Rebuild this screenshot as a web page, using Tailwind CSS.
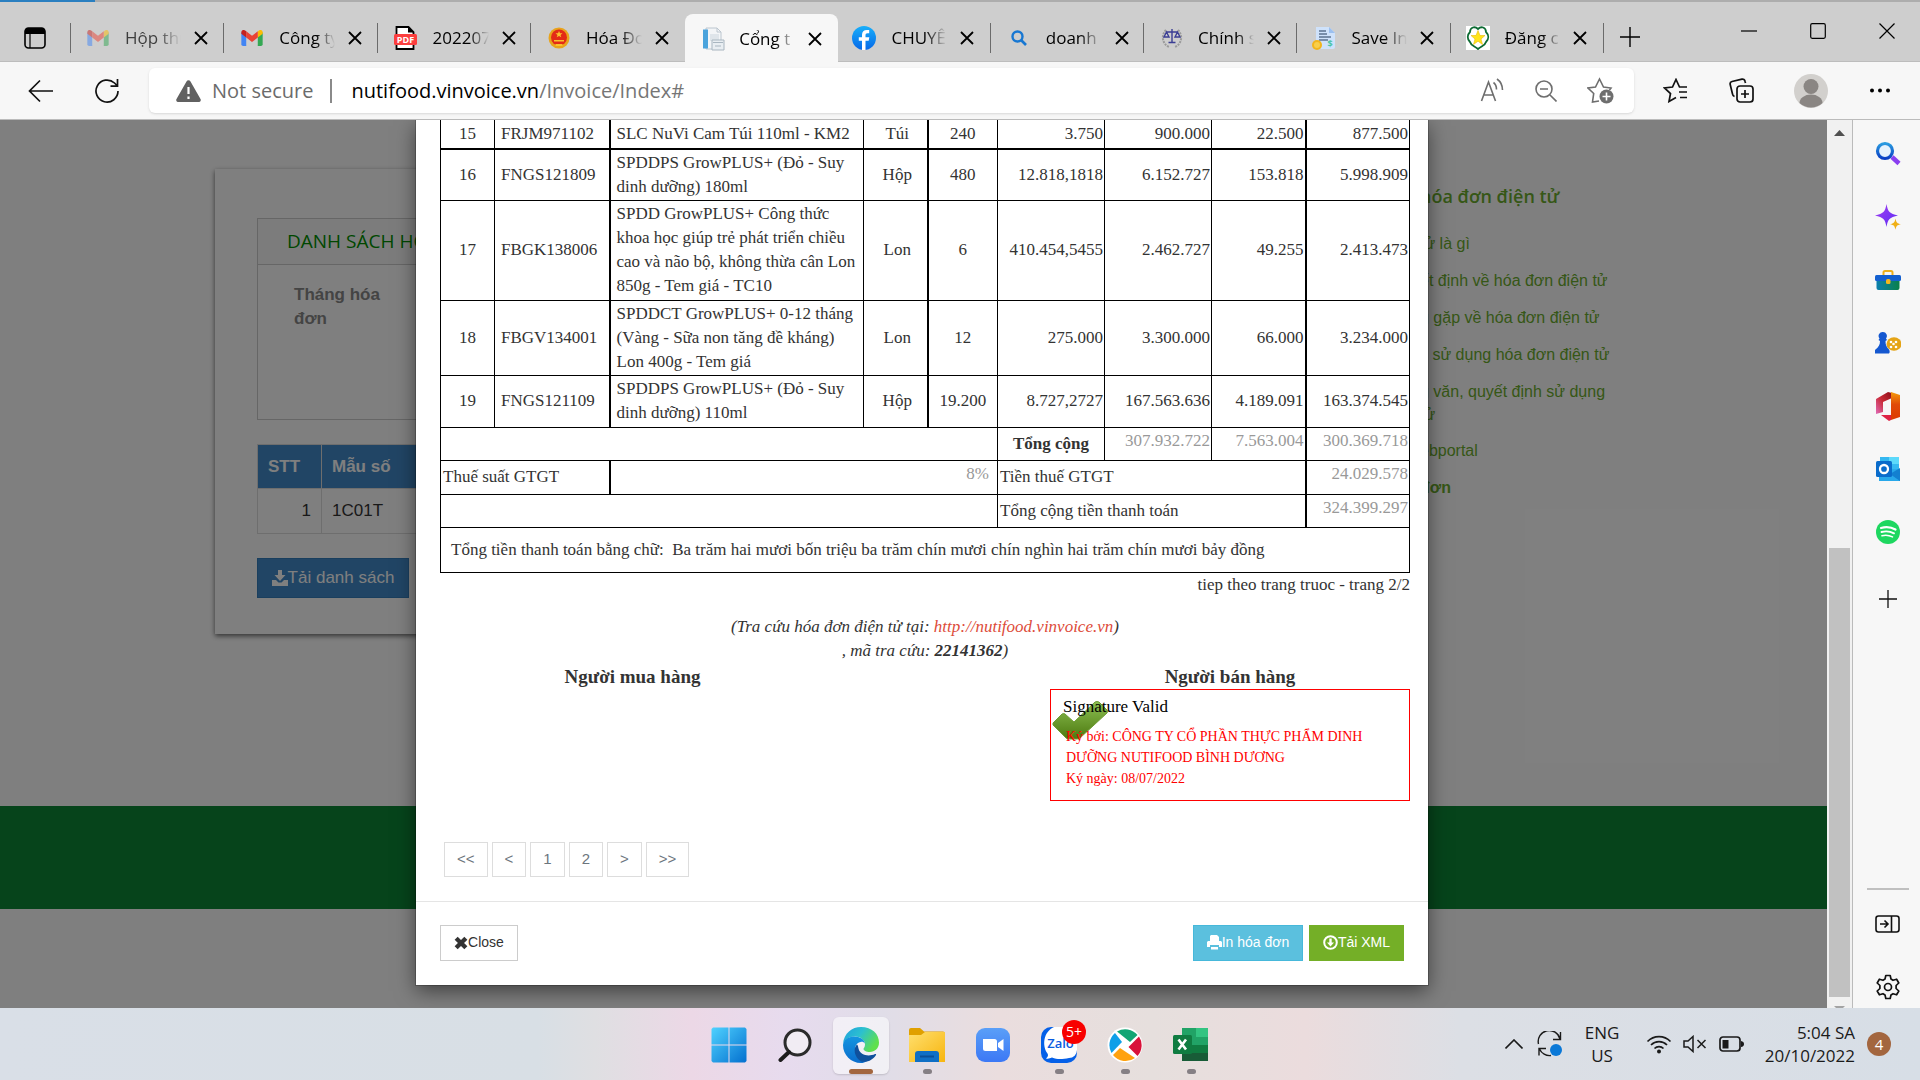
<!DOCTYPE html>
<html lang="vi">
<head>
    <meta charset="UTF-8">
    <meta name="viewport" content="width=device-width, initial-scale=1.0">
    <title>Cổng thông tin hóa đơn điện tử</title>
    <script src="https://cdn.jsdelivr.net/npm/@tailwindcss/browser@4"></script>
</head>
<body class="h-screen flex flex-col overflow-hidden bg-[#f7f7f7] text-black font-['Open_Sans','Noto_Sans',sans-serif]">

    <!-- shared symbols and gradients -->
    <svg class="absolute w-0 h-0">
        <symbol id="x" viewBox="0 0 16 16"><path d="M2 2l12 12M14 2L2 14" stroke="currentColor" stroke-width="1.8" fill="none"/></symbol>
        <symbol id="gmail" viewBox="0 0 24 18">
            <path d="M0 2.5V16a2 2 0 0 0 2 2h3.500V7z" fill="#4285f4"/>
            <path d="M24 2.500V16a2 2 0 0 1-2 2h-3.500V7z" fill="#34a853"/>
            <path d="M18.500 2v6.500L24 4.200V2.500C24 .2 21.500-.8 19.700.600z" fill="#fbbc04"/>
            <path d="M5.500 8.500V1.500L12 6.400l6.500-4.900v7L12 13.400z" fill="#ea4335"/>
            <path d="M0 2.500v1.700l5.500 4.300v-7L4.300.600C2.500-.8 0 .2 0 2.500z" fill="#c5221f"/>
        </symbol>
        <defs>
            <linearGradient id="lens" x1="0" y1="0" x2="0" y2="1"><stop stop-color="#2a9be0"/><stop offset="1" stop-color="#0a3fc4"/></linearGradient>
            <linearGradient id="spark" x1="0" y1="0" x2="1" y2="1"><stop stop-color="#a53df0"/><stop offset="1" stop-color="#5a2df5"/></linearGradient>
            <linearGradient id="case" x1="0" y1="0" x2="1" y2="0"><stop stop-color="#0a7fae"/><stop offset="1" stop-color="#0a8048"/></linearGradient>
            <linearGradient id="officeL" x1="1" y1="0" x2="0" y2="1"><stop stop-color="#8c0d18"/><stop offset=".5" stop-color="#c92a36"/><stop offset="1" stop-color="#e06bb8"/></linearGradient>
            <linearGradient id="officeR" x1="0" y1="0" x2="0" y2="1"><stop stop-color="#f59a0a"/><stop offset=".45" stop-color="#e04a08"/><stop offset="1" stop-color="#dd3b00"/></linearGradient>
            <linearGradient id="win" x1="0" y1="0" x2="1" y2="1"><stop stop-color="#4fd2ff"/><stop offset="1" stop-color="#0470cf"/></linearGradient>
            <linearGradient id="edgeTop" x1="0" y1="0" x2="1" y2=".5"><stop stop-color="#1e9fe0"/><stop offset=".5" stop-color="#2cc0cf"/><stop offset="1" stop-color="#5fe04c"/></linearGradient>
            <linearGradient id="edgeLow" x1="0" y1="0" x2="0" y2="1"><stop stop-color="#1595e0"/><stop offset="1" stop-color="#0a6ccc"/></linearGradient>
            <linearGradient id="folder" x1="0" y1="0" x2="1" y2="1"><stop stop-color="#ffdf6e"/><stop offset="1" stop-color="#f7b50f"/></linearGradient>
            <linearGradient id="zoomBg" x1="0" y1="0" x2="0" y2="1"><stop stop-color="#5a9ff8"/><stop offset="1" stop-color="#3c78f5"/></linearGradient>
            <linearGradient id="tick" x1="0" y1="0" x2="0" y2="1"><stop stop-color="#8cbf52"/><stop offset="1" stop-color="#4d7a10"/></linearGradient>
            <linearGradient id="fb" x1="0" y1="0" x2="0" y2="1"><stop stop-color="#19affa"/><stop offset="1" stop-color="#0668e8"/></linearGradient>
        </defs>
    </svg>

    <!-- Tab strip -->
    <header class="h-[62px] shrink-0 flex bg-[#cecece] border-b border-[#bdbdbd] relative">
        <div class="absolute top-0 inset-x-0 h-[2px] bg-[#adadad]"><div class="w-[95px] h-[2px] bg-[#2a7fc0]"></div></div>
        <button class="w-[70px] pt-[14px] grid place-items-center" aria-label="Tab actions">
            <svg class="size-[22px]" viewBox="0 0 22 22"><rect x="1" y="1" width="20" height="20" rx="3.500" fill="none" stroke="#000" stroke-width="1.600"/><path d="M1 4a3 3 0 0 1 3-3h14a3 3 0 0 1 3 3v3H1z"/><path d="M6 7v14" stroke="#000" stroke-width="1.200"/></svg>
        </button>
        <nav class="flex-1 flex text-[17px] leading-6">
            <div class="flex-1 flex items-center pt-[15px] relative">
                <span class="absolute left-0 top-[23px] w-[1px] h-[30px] bg-[#6b6b6b]"></span>
                <svg class="ml-[17px] w-[22px] h-[16px] opacity-50"><use href="#gmail"/></svg>
                <a href="#" class="ml-[16px] w-[56px] overflow-hidden whitespace-nowrap opacity-70 [mask-image:linear-gradient(to_right,black_60%,transparent)]">Hộp thư</a>
                <button class="ml-[12px]" aria-label="Close tab"><svg class="size-4"><use href="#x"/></svg></button>
            </div>
            <div class="flex-1 flex items-center pt-[15px] relative">
                <span class="absolute left-0 top-[23px] w-[1px] h-[30px] bg-[#6b6b6b]"></span>
                <svg class="ml-[18px] w-[22px] h-[16px]"><use href="#gmail"/></svg>
                <a href="#" class="ml-[16px] w-[56px] overflow-hidden whitespace-nowrap [mask-image:linear-gradient(to_right,black_65%,transparent)]">Công ty</a>
                <button class="ml-[12px]" aria-label="Close tab"><svg class="size-4"><use href="#x"/></svg></button>
            </div>
            <div class="flex-1 flex items-center pt-[15px] relative">
                <span class="absolute left-0 top-[23px] w-[1px] h-[30px] bg-[#6b6b6b]"></span>
                <svg class="ml-[17px] w-[23px] h-[24px]" viewBox="0 0 23 24"><path d="M2.500 1h12l5 5v17h-17z" fill="#fff" stroke="#000" stroke-width="1.800"/><path d="M14 1v5.500h5.500z"/><rect y="8" width="23" height="11" rx="1.500" fill="#fb3f3f"/><text x="11.500" y="17" font-size="9" font-weight="700" fill="#fff" text-anchor="middle">PDF</text></svg>
                <a href="#" class="ml-[16px] w-[56px] overflow-hidden whitespace-nowrap [mask-image:linear-gradient(to_right,black_65%,transparent)]">202207</a>
                <button class="ml-[12px]" aria-label="Close tab"><svg class="size-4"><use href="#x"/></svg></button>
            </div>
            <div class="flex-1 flex items-center pt-[15px] relative">
                <span class="absolute left-0 top-[23px] w-[1px] h-[30px] bg-[#6b6b6b]"></span>
                <svg class="ml-[18px] size-[22px]" viewBox="0 0 22 22"><circle cx="11" cy="11" r="10.500" fill="#e8a41c"/><circle cx="11" cy="10.500" r="8" fill="#e32a17"/><path d="M11 4l1 2.300h2.500l-2 1.600.8 2.400-2.300-1.400-2.300 1.400.8-2.400-2-1.600H10zM6 13h10v1.600H6zM7.500 17h7v2h-7z" fill="#f9c22c"/></svg>
                <a href="#" class="ml-[16px] w-[56px] overflow-hidden whitespace-nowrap [mask-image:linear-gradient(to_right,black_60%,transparent)]">Hóa Đơn</a>
                <button class="ml-[12px]" aria-label="Close tab"><svg class="size-4"><use href="#x"/></svg></button>
            </div>
            <div class="flex-1 flex items-center relative mt-[14px] ml-[2px] -mr-[2px] pt-[1px] -mb-[1px] rounded-t-lg bg-[#f7f7f7]">
                <svg class="ml-[16px] size-[24px]" viewBox="0 0 24 24"><path d="M5 1h11l4 4v17H5z" fill="#f3f5f7" stroke="#bcc6cf"/><path d="M16 1v4h4" fill="none" stroke="#bcc6cf"/><path d="M2 2.500h5v19H2z" fill="#4aa3dc"/><path d="M9 7h9v7H9z" fill="#dfe5ea"/><path d="M11 13h12v10H11z" fill="#e9eef2" stroke="#a9b6c0"/><path d="M12 15.500h10M14 19h6" stroke="#a9b6c0"/></svg>
                <a href="#" class="ml-[14px] w-[56px] overflow-hidden whitespace-nowrap [mask-image:linear-gradient(to_right,black_65%,transparent)]">Cổng t</a>
                <button class="ml-[12px]" aria-label="Close tab"><svg class="size-4"><use href="#x"/></svg></button>
            </div>
            <div class="flex-1 flex items-center pt-[15px] relative">
                <svg class="ml-[16px] size-[24px]" viewBox="0 0 24 24"><circle cx="12" cy="12" r="12" fill="url(#fb)"/><path d="M13.500 24v-9.200h3.200l.6-3.500h-3.800V9.200c0-1.300.5-2 2-2h1.700V4.100c-.5-.1-1.500-.2-2.400-.2-3 0-4.800 1.800-4.800 4.800v2.600H6.800v3.500H10V24z" fill="#fff"/></svg>
                <a href="#" class="ml-[15px] w-[56px] overflow-hidden whitespace-nowrap [mask-image:linear-gradient(to_right,black_60%,transparent)]">CHUYÊN</a>
                <button class="ml-[12px]" aria-label="Close tab"><svg class="size-4"><use href="#x"/></svg></button>
            </div>
            <div class="flex-1 flex items-center pt-[15px] relative">
                <span class="absolute left-0 top-[23px] w-[1px] h-[30px] bg-[#6b6b6b]"></span>
                <svg class="ml-[20px] size-[18px]" viewBox="0 0 18 18"><circle cx="7.500" cy="7.500" r="5" fill="none" stroke="#1777d2" stroke-width="2.400"/><path d="M11 11l5 5" stroke="#1777d2" stroke-width="2.600"/></svg>
                <a href="#" class="ml-[18px] w-[56px] overflow-hidden whitespace-nowrap [mask-image:linear-gradient(to_right,black_60%,transparent)]">doanh</a>
                <button class="ml-[12px]" aria-label="Close tab"><svg class="size-4"><use href="#x"/></svg></button>
            </div>
            <div class="flex-1 flex items-center pt-[15px] relative">
                <span class="absolute left-0 top-[23px] w-[1px] h-[30px] bg-[#6b6b6b]"></span>
                <svg class="ml-[18px] size-[22px]" viewBox="0 0 22 22" fill="none"><path d="M5 3C0 8 1 17 8 20M17 3c5 5 4 14-3 17" stroke="#9a9a9a" stroke-width="2" stroke-dasharray="2 1"/><path d="M11 2v13M5 5h12M7.500 15.500h7M3 10l2.500-5L8 10zM14 10l2.500-5 2.500 5z" stroke="#3b3e94" stroke-width="1.400"/></svg>
                <a href="#" class="ml-[15px] w-[56px] overflow-hidden whitespace-nowrap [mask-image:linear-gradient(to_right,black_70%,transparent)]">Chính s</a>
                <button class="ml-[12px]" aria-label="Close tab"><svg class="size-4"><use href="#x"/></svg></button>
            </div>
            <div class="flex-1 flex items-center pt-[15px] relative">
                <span class="absolute left-0 top-[23px] w-[1px] h-[30px] bg-[#6b6b6b]"></span>
                <svg class="ml-[16px] size-[24px]" viewBox="0 0 24 24"><path d="M4 1h13l6 6v14a2 2 0 0 1-2 2H6a2 2 0 0 1-2-2z" fill="#cfe2fb"/><path d="M17 1v6h6z" fill="#9cc0f0"/><path d="M7 5h7M7 8h8M7 11h12M7 14h9" stroke="#5d7390" stroke-width="1.300"/><circle cx="5" cy="19" r="5" fill="#f2b51d"/><circle cx="5" cy="19" r="3" fill="#f9cf4a"/><text x="18" y="21" font-size="9" font-weight="700" fill="#4bc4a5" text-anchor="middle">$</text></svg>
                <a href="#" class="ml-[15px] w-[56px] overflow-hidden whitespace-nowrap [mask-image:linear-gradient(to_right,black_60%,transparent)]">Save In</a>
                <button class="ml-[12px]" aria-label="Close tab"><svg class="size-4"><use href="#x"/></svg></button>
            </div>
            <div class="flex-1 flex items-center pt-[15px] relative">
                <span class="absolute left-0 top-[23px] w-[1px] h-[30px] bg-[#6b6b6b]"></span>
                <svg class="ml-[16px] size-[24px]" viewBox="0 0 24 24"><path d="M0 0h24v24H0z" fill="#fff"/><path d="M12 3C9 0 4 1 4 6c-3 3-3 7 0 10 1 4 5 4 8 7 3-3 7-3 8-7 3-3 3-7 0-10 0-5-5-6-8-3z" fill="none" stroke="#0d6b33" stroke-width="1.800"/><path d="M12 4.500l2 5h5l-4 3.500 1.500 5.500-4.500-3.300-4.500 3.300L9 13 5 9.500h5z" fill="#ffe51a" stroke="#e8b90c" stroke-width=".6"/></svg>
                <a href="#" class="ml-[15px] w-[56px] overflow-hidden whitespace-nowrap [mask-image:linear-gradient(to_right,black_65%,transparent)]">Đăng c</a>
                <button class="ml-[11px]" aria-label="Close tab"><svg class="size-4"><use href="#x"/></svg></button>
            </div>
        </nav>
        <div class="w-[317px] flex">
            <div class="w-[112px] pt-[12px] flex items-center relative">
                <span class="absolute left-0 top-[23px] w-[1px] h-[30px] bg-[#6b6b6b]"></span>
                <button class="ml-[16px]" aria-label="New tab"><svg class="size-[22px]" viewBox="0 0 22 22"><path d="M11 1v20M1 11h20" stroke="#000" stroke-width="1.400"/></svg></button>
            </div>
            <button class="w-[68px] grid place-items-center" aria-label="Minimize"><svg class="size-4" viewBox="0 0 16 16"><path d="M0 8h16" stroke="#000" stroke-width="1.200"/></svg></button>
            <button class="w-[70px] grid place-items-center" aria-label="Maximize"><svg class="size-4" viewBox="0 0 16 16"><rect x=".7" y=".7" width="14.600" height="14.600" rx="1.500" fill="none" stroke="#000" stroke-width="1.200"/></svg></button>
            <button class="w-[67px] grid place-items-center" aria-label="Close"><svg class="size-4" viewBox="0 0 16 16"><path d="M.500.500l15 15M15.500.500l-15 15" stroke="#000" stroke-width="1.200"/></svg></button>
        </div>
    </header>

    <!-- Toolbar -->
    <div class="h-[58px] shrink-0 flex items-center border-b border-[#bbb]">
        <button class="ml-[28px]" aria-label="Back"><svg class="size-[26px]" viewBox="0 0 26 26"><path d="M25 13H2M12 2.500L1.500 13 12 23.500" fill="none" stroke="#111" stroke-width="1.700"/></svg></button>
        <button class="ml-[40px]" aria-label="Reload"><svg class="size-[26px]" viewBox="0 0 26 26"><path d="M24 13A11 11 0 1 1 20.500 5l2.500 2.500M23.500 1v7.200H16.500" fill="none" stroke="#111" stroke-width="1.700"/></svg></button>
        <div class="ml-[29px] flex-1 h-[45px] flex items-center rounded-md bg-white shadow-sm text-[20px] leading-6">
            <svg class="ml-[27px] w-[25px] h-[22px]" viewBox="0 0 25 22"><path d="M10.500 1.500a2.300 2.300 0 0 1 4 0L24.500 19a2 2 0 0 1-2 3h-20a2 2 0 0 1-2-3z" fill="#616161"/><path d="M12.500 7v7M12.500 16.500V19" stroke="#fff" stroke-width="2.200"/></svg>
            <span class="ml-[11px] text-[#6b6b6b]">Not secure</span>
            <span class="ml-[17px] w-[2px] h-[24px] bg-[#8a8a8a]"></span>
            <div role="textbox" contenteditable="true" aria-label="Address" class="ml-[19px] flex-1 whitespace-nowrap">nutifood.vinvoice.vn<span class="text-[#767676]">/Invoice/Index#</span></div>
            <div class="flex items-center gap-[30px] pr-[20px] text-[#6e6e6e]">
                <button aria-label="Read aloud"><svg class="size-[25px]" viewBox="0 0 25 25" fill="none" stroke="currentColor" stroke-width="1.600"><path d="M1.500 23L8.500 4l7 19M4 17h9M13.500 4.500c2 1.500 3 4 3 7M17 1c3.500 2.500 5.500 6.500 5.500 11"/></svg></button>
                <button aria-label="Zoom out"><svg class="size-[22px]" viewBox="0 0 22 22" fill="none" stroke="currentColor" stroke-width="1.600"><circle cx="9" cy="9" r="8"/><path d="M15 15l6.500 6.500M5 9h8"/></svg></button>
                <button aria-label="Add favorite"><svg class="size-[27px]" viewBox="0 0 27 27"><path d="M12 24l-6.500 1 1.200-8.500L1 11l7.500-1L12.500 2l4 8 7.500 1-1.500 2" fill="none" stroke="currentColor" stroke-width="1.600"/><circle cx="19.500" cy="19.500" r="7" fill="currentColor"/><path d="M19.500 15.500v8M15.500 19.500h8" stroke="#fff" stroke-width="1.600"/></svg></button>
            </div>
        </div>
        <div class="w-[286px] flex items-center pl-[29px]">
            <button aria-label="Favorites"><svg class="size-[25px]" viewBox="0 0 25 25" fill="none" stroke="#111" stroke-width="1.700"><path d="M13 19.500L6 23.500l1.500-8L1.500 10l8-1L13 1.500l3.500 7.500H24M16 14h8M17 19.500h7"/></svg></button>
            <button class="ml-[41px]" aria-label="Collections"><svg class="size-[25px]" viewBox="0 0 25 25" fill="none" stroke="#111" stroke-width="1.700"><path d="M5.500 18.500a3 3 0 0 1-2-2.500L1.200 6.500A2.500 2.500 0 0 1 3 3.500L13 1.200a2.500 2.500 0 0 1 3 2L16.500 5"/><rect x="8" y="8" width="16" height="16" rx="3"/><path d="M16 12v8M12 16h8"/></svg></button>
            <button class="ml-[40px]" aria-label="Profile"><svg class="size-[34px]" viewBox="0 0 34 34"><circle cx="17" cy="17" r="17" fill="#d2d0cd"/><circle cx="17" cy="12.500" r="7.500" fill="#8a8683"/><path d="M5.500 29a11.500 8.500 0 0 1 23 0 17 17 0 0 1-23 0z" fill="#8a8683"/></svg></button>
            <button class="ml-[42px]" aria-label="Settings and more"><svg class="w-[20px] h-[5px]" viewBox="0 0 20 5"><circle cx="2" cy="2.500" r="2"/><circle cx="10" cy="2.500" r="2"/><circle cx="18" cy="2.500" r="2"/></svg></button>
        </div>
    </div>

    <main class="flex-1 min-h-0 flex">
        <!-- Web page -->
        <div class="flex-1 relative overflow-hidden bg-white font-['Liberation_Sans',Arial,sans-serif] text-[17px]">
            <div class="h-[686px] flex items-start pt-[49px] pl-[215px]">
                <section class="w-[1050px] h-[465px] px-[42px] pt-[49px] bg-white shadow-[0_2px_5px_rgba(0,0,0,0.6)]">
                    <div class="h-[202px] border border-[#ccc]">
                        <h2 class="h-[46px] px-[29px] flex items-center border-b border-[#ccc] bg-[#f8f8f8] text-[19px] text-[#009000] font-['Open_Sans',sans-serif]">DANH SÁCH HÓA ĐƠN</h2>
                        <div class="w-[140px] pt-[18px] pl-[36px] leading-6 font-bold text-[#888]">Tháng hóa đơn</div>
                    </div>
                    <table class="mt-[24px] w-full border-collapse">
                        <tr class="h-[44px] bg-[#428bca] text-white text-left">
                            <th class="w-[64px] pl-[10px] border border-[#ddd]">STT</th>
                            <th class="pl-[10px] border border-[#ddd]">Mẫu số</th>
                        </tr>
                        <tr class="h-[45px] text-[#333]">
                            <td class="pr-[10px] text-right border border-[#ddd]">1</td>
                            <td class="pl-[10px] border border-[#ddd]">1C01T</td>
                        </tr>
                    </table>
                    <button class="mt-[24px] w-[152px] h-[40px] flex items-center justify-center bg-[#428bca] border border-[#357ebd] text-white whitespace-nowrap">
                        <svg class="size-[16px]" viewBox="0 0 16 16" fill="#fff"><path d="M6 0h4v5h3.500L8 11 2.500 5H6zM0 10h4l2.500 2.500h3L12 10h4v6H0z"/></svg>Tải danh sách
                    </button>
                </section>
                <aside class="ml-[155px] pt-[14px] w-[210px] flex flex-col text-[16px] text-[#6cae2e] leading-[23px] whitespace-nowrap">
                    <h3 class="mb-[23px] text-[18px] leading-[26px] font-semibold font-['Open_Sans',sans-serif]">hóa đơn điện tử</h3>
                    <a href="#" class="mb-[14px]">tử là gì</a>
                    <a href="#" class="mb-[14px]">ết định về hóa đơn điện tử</a>
                    <a href="#" class="mb-[14px]">g gặp về hóa đơn điện tử</a>
                    <a href="#" class="mb-[14px]">c sử dụng hóa đơn điện tử</a>
                    <a href="#" class="mb-[13px]">g văn, quyết định sử dụng<br>tử</a>
                    <a href="#" class="mb-[14px]">ebportal</a>
                    <a href="#" class="font-bold">đơn</a>
                </aside>
            </div>
            <footer class="h-[103px] bg-[#0c8836]"></footer>

            <!-- Invoice dialog -->
            <div class="absolute inset-0 bg-black/50 flex justify-center items-start pl-[17px]">
                <div role="dialog" class="w-[1012px] bg-white text-[#333] shadow-[0_6px_19px_rgba(0,0,0,0.5),0_0_0_1px_rgba(0,0,0,0.2)]">
                    <div class="pl-[24px] pr-[18px] font-['Liberation_Serif','Times_New_Roman',serif] leading-6">
                        <table class="w-full table-fixed border-collapse border-x border-b border-black">
                            <colgroup>
                                <col class="w-[54px]"><col class="w-[115px]"><col class="w-[254px]"><col class="w-[64px]"><col class="w-[70px]"><col class="w-[107px]"><col class="w-[107px]"><col class="w-[94px]"><col>
                            </colgroup>
                            <tr class="h-[29px] border-b-2 border-black">
                                <td class="border-r border-black text-center">15</td>
                                <td class="border-r-2 border-black pl-[6px]">FRJM971102</td>
                                <td class="border-r border-black pl-[6px]">SLC NuVi Cam Túi 110ml - KM2</td>
                                <td class="border-r-2 border-black pl-[4px] text-center">Túi</td>
                                <td class="border-r border-black text-center">240</td>
                                <td class="border-r border-black pr-[1px] text-right">3.750</td>
                                <td class="border-r border-black pr-[1px] text-right">900.000</td>
                                <td class="border-r-2 border-black pr-[1px] text-right">22.500</td>
                                <td class="pr-[1px] text-right">877.500</td>
                            </tr>
                            <tr class="h-[51px] border-b border-black">
                                <td class="border-r border-black text-center">16</td>
                                <td class="border-r-2 border-black pl-[6px]">FNGS121809</td>
                                <td class="border-r border-black pl-[6px]">SPDDPS GrowPLUS+ (Đỏ - Suy dinh dưỡng) 180ml</td>
                                <td class="border-r-2 border-black pl-[4px] text-center">Hộp</td>
                                <td class="border-r border-black text-center">480</td>
                                <td class="border-r border-black pr-[1px] text-right">12.818,1818</td>
                                <td class="border-r border-black pr-[1px] text-right">6.152.727</td>
                                <td class="border-r-2 border-black pr-[1px] text-right">153.818</td>
                                <td class="pr-[1px] text-right">5.998.909</td>
                            </tr>
                            <tr class="h-[100px] border-b border-black">
                                <td class="border-r border-black text-center">17</td>
                                <td class="border-r-2 border-black pl-[6px]">FBGK138006</td>
                                <td class="border-r border-black pl-[6px]">SPDD GrowPLUS+ Công thức<br>khoa học giúp trẻ phát triển chiều<br>cao và não bộ, không thừa cân Lon<br>850g - Tem giá - TC10</td>
                                <td class="border-r-2 border-black pl-[4px] text-center">Lon</td>
                                <td class="border-r border-black text-center">6</td>
                                <td class="border-r border-black pr-[1px] text-right">410.454,5455</td>
                                <td class="border-r border-black pr-[1px] text-right">2.462.727</td>
                                <td class="border-r-2 border-black pr-[1px] text-right">49.255</td>
                                <td class="pr-[1px] text-right">2.413.473</td>
                            </tr>
                            <tr class="h-[75px] border-b border-black">
                                <td class="border-r border-black text-center">18</td>
                                <td class="border-r-2 border-black pl-[6px]">FBGV134001</td>
                                <td class="border-r border-black pl-[6px]">SPDDCT GrowPLUS+ 0-12 tháng<br>(Vàng - Sữa non tăng đề kháng)<br>Lon 400g - Tem giá</td>
                                <td class="border-r-2 border-black pl-[4px] text-center">Lon</td>
                                <td class="border-r border-black text-center">12</td>
                                <td class="border-r border-black pr-[1px] text-right">275.000</td>
                                <td class="border-r border-black pr-[1px] text-right">3.300.000</td>
                                <td class="border-r-2 border-black pr-[1px] text-right">66.000</td>
                                <td class="pr-[1px] text-right">3.234.000</td>
                            </tr>
                            <tr class="h-[52px] border-b border-black">
                                <td class="border-r border-black text-center">19</td>
                                <td class="border-r-2 border-black pl-[6px]">FNGS121109</td>
                                <td class="border-r border-black pl-[6px]">SPDDPS GrowPLUS+ (Đỏ - Suy dinh dưỡng) 110ml</td>
                                <td class="border-r-2 border-black pl-[4px] text-center">Hộp</td>
                                <td class="border-r border-black text-center">19.200</td>
                                <td class="border-r border-black pr-[1px] text-right">8.727,2727</td>
                                <td class="border-r border-black pr-[1px] text-right">167.563.636</td>
                                <td class="border-r-2 border-black pr-[1px] text-right">4.189.091</td>
                                <td class="pr-[1px] text-right">163.374.545</td>
                            </tr>
                            <tr class="h-[33px] border-b border-black">
                                <td colspan="5" class="border-r border-black"></td>
                                <td class="border-r border-black text-center font-bold">Tổng cộng</td>
                                <td class="border-r border-black pt-[1px] pr-[1px] text-right align-top text-[#999]">307.932.722</td>
                                <td class="border-r-2 border-black pt-[1px] pr-[1px] text-right align-top text-[#999]">7.563.004</td>
                                <td class="pt-[1px] pr-[1px] text-right align-top text-[#999]">300.369.718</td>
                            </tr>
                            <tr class="h-[34px] border-b border-black">
                                <td colspan="2" class="border-r-2 border-black pl-[2px]">Thuế suất GTGT</td>
                                <td colspan="3" class="border-r border-black pt-[1px] pr-[8px] text-right align-top text-[#999]">8%</td>
                                <td colspan="3" class="border-r-2 border-black pl-[2px]">Tiền thuế GTGT</td>
                                <td class="pt-[1px] pr-[1px] text-right align-top text-[#999]">24.029.578</td>
                            </tr>
                            <tr class="h-[33px] border-b border-black">
                                <td colspan="5" class="border-r border-black"></td>
                                <td colspan="3" class="border-r-2 border-black pl-[2px]">Tổng cộng tiền thanh toán</td>
                                <td class="pt-[1px] pr-[1px] text-right align-top text-[#999]">324.399.297</td>
                            </tr>
                            <tr class="h-[45px]">
                                <td colspan="9" class="pl-[10px]">Tổng tiền thanh toán bằng chữ:&nbsp; Ba trăm hai mươi bốn triệu ba trăm chín mươi chín nghìn hai trăm chín mươi bảy đồng</td>
                            </tr>
                        </table>
                        <p class="text-right">tiep theo trang truoc - trang 2/2</p>
                        <p class="mt-[18px] text-center italic">(Tra cứu hóa đơn điện tử tại: <a href="#" class="text-[#dd4b39]">http://nutifood.vinvoice.vn</a>)<br>, mã tra cứu: <b>22141362</b>)</p>
                        <div class="flex justify-between">
                            <h4 class="w-[385px] pt-[2px] text-center text-[19px] leading-6 font-bold">Người mua hàng</h4>
                            <div class="w-[360px]">
                                <h4 class="pt-[2px] text-center text-[19px] leading-6 font-bold">Người bán hàng</h4>
                                <div class="relative h-[112px] border border-[#f00] pt-[5px] pl-[12px]">
                                    <svg class="absolute left-[1px] top-[11px] w-[56px] h-[39px]" viewBox="0 0 56 39"><path d="M1 22l9-9q2-1 3 0l9 8L43 1q2-1 4 0l8 8q1 2 0 3L28 37q-1 1-3 1h-8q-2 0-3-1L1 24z" fill="url(#tick)" stroke="#6f9c36"/></svg>
                                    <p class="relative text-black">Signature Valid</p>
                                    <p class="relative mt-[7px] pl-[3px] text-[14px] leading-[21px] text-[#f00]">Ký bởi: CÔNG TY CỔ PHẦN THỰC PHẨM DINH<br>DƯỠNG NUTIFOOD BÌNH DƯƠNG<br>Ký ngày: 08/07/2022</p>
                                </div>
                            </div>
                        </div>
                    </div>
                    <div class="mt-[41px] ml-[28px] flex gap-[4px] text-[15px] text-[#6c757d]">
                        <button class="h-[35px] px-[12px] border border-[#ddd]">&lt;&lt;</button>
                        <button class="h-[35px] px-[12px] border border-[#ddd]">&lt;</button>
                        <button class="h-[35px] px-[12px] border border-[#ddd]">1</button>
                        <button class="h-[35px] px-[12px] border border-[#ddd]">2</button>
                        <button class="h-[35px] px-[12px] border border-[#ddd]">&gt;</button>
                        <button class="h-[35px] px-[12px] border border-[#ddd]">&gt;&gt;</button>
                    </div>
                    <div class="mt-[24px] pt-[23px] pb-[24px] px-[24px] flex items-center border-t border-[#e5e5e5] text-[14px]">
                        <button class="w-[78px] h-[36px] flex items-center justify-center border border-[#ccc]">
                            <svg class="size-[14px]" viewBox="0 0 13 13"><path d="M2 2l9 9M11 2l-9 9" stroke="#333" stroke-width="4"/></svg>Close
                        </button>
                        <button class="ml-auto w-[110px] h-[36px] flex items-center justify-center bg-[#5bc0de] border border-[#46b8da] text-white">
                            <svg class="size-[15px]" viewBox="0 0 15 15" fill="#fff"><path d="M4 0h6l2 2v4H3V1zM1 6h13l1 1v5h-3v-2H3v2H0V7zM4 12h7v2.500H4z"/></svg>In hóa đơn
                        </button>
                        <button class="ml-[6px] w-[95px] h-[36px] flex items-center justify-center bg-[#74af27] text-white">
                            <svg class="size-[15px]" viewBox="0 0 15 15"><circle cx="7.500" cy="7.500" r="6.300" fill="none" stroke="#fff" stroke-width="2"/><path d="M6.300 3.500h2.400v4H11l-3.500 4-3.500-4h2.300z" fill="#fff"/></svg>Tải XML
                        </button>
                    </div>
                </div>
            </div>
        </div>

        <!-- Scrollbar -->
        <div class="w-[26px] flex flex-col items-center bg-[#f1f1f1] border-r border-[#bbb]">
            <svg class="mt-[10px] w-[11px] h-[6px]" viewBox="0 0 11 6"><path d="M5.500 0L11 6H0z" fill="#505050"/></svg>
            <div class="mt-auto w-[21px] h-[449px] bg-[#c1c1c1]"></div>
            <svg class="mt-[9px] w-[11px] h-[2px]" viewBox="0 0 11 2"><path d="M0 0h11L9 2H2z" fill="#a3a3a3"/></svg>
        </div>

        <!-- Edge sidebar -->
        <div class="w-[67px] flex flex-col items-center pl-[2px]">
            <button class="mt-[21px]" aria-label="Search"><svg class="size-[26px]" viewBox="0 0 26 26"><path d="M17 16l7 6.500" stroke="#8a3ff0" stroke-width="4.500"/><circle cx="10" cy="10" r="7.500" fill="#e6f2fc" stroke="url(#lens)" stroke-width="3.200"/></svg></button>
            <button class="mt-[37px]" aria-label="Discover"><svg class="size-[26px]" viewBox="0 0 26 26"><path d="M11.500 0c1.500 8 3 9.500 11.500 11.500-8.500 2-10 3.500-11.500 11.500C10 15 8.500 13.500 0 11.500 8.500 9.500 10 8 11.500 0z" fill="url(#spark)"/><path d="M20.500 14.500c.8 4 1.500 5 5.500 5.700-4 .8-4.700 1.500-5.500 5.600-.8-4-1.500-4.800-5.500-5.600 4-.8 4.700-1.700 5.500-5.700z" fill="#f0b015"/></svg></button>
            <button class="mt-[37px]" aria-label="Tools"><svg class="size-[26px]" viewBox="0 0 26 26"><path d="M8.500 8V5.500A1.500 1.500 0 0 1 10 4h6a1.500 1.500 0 0 1 1.500 1.500V8" fill="none" stroke="#edaf1a" stroke-width="2"/><path d="M1.500 12h23v9a2 2 0 0 1-2 2h-19a2 2 0 0 1-2-2z" fill="url(#case)"/><rect y="8" width="26" height="6" rx="1.500" fill="#1460d0"/><rect x="11" y="12" width="4.500" height="5" rx="1.500" fill="#f3b71d"/></svg></button>
            <button class="mt-[37px]" aria-label="Games"><svg class="size-[26px]" viewBox="0 0 26 26"><ellipse cx="19" cy="14" rx="7.500" ry="6.800" fill="#e5a416"/><g fill="#fff"><circle cx="16" cy="12" r="1.300"/><circle cx="21" cy="12" r="1.300"/><circle cx="18.500" cy="14" r="1.300"/><circle cx="16" cy="17" r="1.300"/><circle cx="21" cy="17" r="1.300"/></g><path d="M8 2a4 4 0 0 1 3 6.500L12 10l-1.500 1c0 4 1 6 3.500 8.500.8 1 1 3.500 0 4H0c-1-1-.5-3.500.5-4C3.500 17 5 15 5 11l-1.500-1 1-1.500A4 4 0 0 1 8 2z" fill="#1558d0"/></svg></button>
            <button class="mt-[35px]" aria-label="Office"><svg class="w-[26px] h-[30px]" viewBox="0 0 26 30"><path d="M1 8L13 1l4 1v5l-9 4v10l-7 2z" fill="url(#officeL)"/><path d="M6 24h10v5l-2 1z" fill="#dd2345"/><path d="M16 1l9 3v22l-9 3z" fill="url(#officeR)"/></svg></button>
            <button class="mt-[35px]" aria-label="Outlook"><svg class="size-[26px]" viewBox="0 0 26 26"><path d="M5 1h19v13H5z" fill="#35b8f1"/><path d="M14 1h10v7H14z" fill="#5cd9fb"/><path d="M4 13h21v12H4z" fill="#28a8ea"/><path d="M25 12v13L15 18z" fill="#1380d0"/><rect x="1" y="5" width="16" height="16" rx="1.500" fill="#0a6ccb"/><circle cx="9" cy="13" r="4" fill="none" stroke="#fff" stroke-width="2.300"/></svg></button>
            <button class="mt-[38px]" aria-label="Spotify"><svg class="size-[24px]" viewBox="0 0 24 24" fill="none" stroke="#fff" stroke-linecap="round"><circle cx="12" cy="12" r="12" fill="#1ed760" stroke="none"/><path d="M5 8c5-1.500 10-1 14.500 1.500" stroke-width="2.200"/><path d="M5.500 12c4.500-1.200 8.500-.8 12.500 1.300" stroke-width="1.900"/><path d="M6 15.700c4-1 7-.6 10.500 1.200" stroke-width="1.600"/></svg></button>
            <button class="mt-[46px]" aria-label="Add"><svg class="size-[18px]" viewBox="0 0 18 18"><path d="M9 0v18M0 9h18" stroke="#111" stroke-width="1.300"/></svg></button>
            <div class="mt-auto w-[42px] h-[2px] bg-[#c0c0c0]"></div>
            <button class="mt-[25px]" aria-label="Hide sidebar"><svg class="w-[25px] h-[18px]" viewBox="0 0 25 18" fill="none" stroke="#111" stroke-width="1.600"><rect x="1" y="1" width="23" height="16" rx="2.500"/><path d="M16.500 1v16M5 9h7.500M9.500 5.500L13 9l-3.500 3.500"/></svg></button>
            <button class="mt-[41px] mb-[8px]" aria-label="Sidebar settings"><svg class="size-[26px]" viewBox="0 0 26 26" fill="none" stroke="#111" stroke-width="1.700" stroke-linejoin="round"><circle cx="13" cy="13" r="3.500"/><path d="M10.800 1.500h4.400l.8 3.600 2 1.200 3.600-1.100 2.200 3.800-2.700 2.500v3l2.700 2.500-2.200 3.800-3.600-1.100-2 1.200-.8 3.600h-4.400l-.8-3.600-2-1.200-3.600 1.100L2.200 17l2.700-2.500v-3L2.200 9l2.200-3.800L8 6.300l2-1.200z"/></svg></button>
        </div>
    </main>

    <!-- Taskbar -->
    <div class="h-[72px] shrink-0 relative flex items-center justify-center bg-[linear-gradient(to_right,#d9dfe7_0%,#d8dfe5_28%,#dfdfe2_31%,#ecd8e6_36%,#e7dbee_41%,#e0dde8_46%,#eaddde_52%,#e6dfdd_60%,#ebdcdd_68%,#dcdfe5_76%,#d7dee6_100%)]">
        <button class="w-[66px] h-[72px] pt-[2px] grid place-items-center" aria-label="Start"><svg class="size-[36px]" viewBox="0 0 36 36"><path d="M2 .5h15.500V17.500H.5V2zM18.500.5H34l1.500 1.500v15.500h-17zM.5 18.500h17v17H2L.5 34zM18.500 18.500h17V34l-1.500 1.500H18.500z" fill="url(#win)"/></svg></button>
        <button class="w-[66px] h-[72px] pt-[2px] grid place-items-center" aria-label="Search"><svg class="size-[34px]" viewBox="0 0 34 34"><circle cx="19.500" cy="14.500" r="12.500" fill="#f1ecf3" stroke="#2b2b2b" stroke-width="3"/><path d="M11 24l-8.500 8" stroke="#1c1c1c" stroke-width="4" stroke-linecap="round"/></svg></button>
        <button class="relative w-[66px] h-[72px] pt-[2px] grid place-items-center" aria-label="Microsoft Edge">
            <span class="absolute inset-x-[5px] top-[9px] h-[57px] rounded-md bg-white/55 shadow-[0_1px_2px_rgba(0,0,0,0.15)]"></span>
            <svg class="relative size-[36px]" viewBox="0 0 36 36"><path d="M0 17C1 6 9 0 18 0c11 0 18 7 18 15.500 0 6-4.500 9.500-9 9.500-4 0-6.500-1.500-6.500-3 0-1 1.500-1.500 1.500-4.500C22 13 17 9.500 12 9.500 6 9.500 1.500 13 0 17z" fill="url(#edgeTop)"/><path d="M0 18C.5 13 5 9.500 11 9.500c6 0 10.500 3 10.800 7-1-1.500-2.500-2-4.300-1.500C13 16 11 20.500 12.500 25c1.500 5 6 9 12 8.500C22 35.500 20 36 18 36 8 36 0 28 0 18z" fill="url(#edgeLow)"/><path d="M14 17.500C10 21 11 30 18 34.500c7 1.500 12-2 15-6.500.5-1-.5-1.300-1-1-6 3-15 1.500-16.500-5.500-.3-1.500-.5-3-1.500-4z" fill="#10509c"/></svg>
            <span class="absolute bottom-[6px] w-[24px] h-[5px] rounded-full bg-[#a3663f]"></span>
        </button>
        <button class="relative w-[66px] h-[72px] pt-[2px] grid place-items-center" aria-label="File Explorer">
            <svg class="size-[36px]" viewBox="0 0 36 36"><path d="M0 3a2 2 0 0 1 2-2h9l4 3.500h19a2 2 0 0 1 2 2V12H0z" fill="#e0a000"/><path d="M0 8h12l4-3h20v30H0z" fill="url(#folder)"/><path d="M6 35V27a3 3 0 0 1 3-3h18a3 3 0 0 1 3 3v8z" fill="#0f6fc5"/><path d="M11 29.500h14" stroke="#0a4f96" stroke-width="2"/></svg>
            <span class="absolute bottom-[6px] w-[9px] h-[5px] rounded-full bg-[#857f84]"></span>
        </button>
        <button class="w-[66px] h-[72px] pt-[2px] grid place-items-center" aria-label="Zoom"><svg class="size-[34px]" viewBox="0 0 34 34"><rect width="34" height="34" rx="9" fill="url(#zoomBg)"/><path d="M7 11h11.500a2.500 2.500 0 0 1 2.500 2.500V23H9.500A2.500 2.500 0 0 1 7 20.500zM22 15l5.500-4v12L22 19z" fill="#fff"/></svg></button>
        <button class="relative w-[66px] h-[72px] pt-[2px] grid place-items-center" aria-label="Zalo">
            <svg class="size-[36px]" viewBox="0 0 36 36"><rect width="36" height="36" rx="10" fill="#0560e8"/><path d="M13 0h13a10 10 0 0 1 10 10v13a8 8 0 0 1-8 8c-6 1-11 2-17-.5-2 1-4 1.500-6 1 2-2 2.500-3 1.500-5C1 19 2 5 13 0z" fill="#fff"/><text x="19.500" y="21" font-size="13" font-weight="600" fill="#0a5be0" text-anchor="middle">Zalo</text></svg>
            <span class="absolute right-[6px] top-[12px] w-[24px] h-[24px] rounded-full bg-[#f80000] text-white text-[14px] leading-6 text-center">5+</span>
            <span class="absolute bottom-[6px] w-[9px] h-[5px] rounded-full bg-[#857f84]"></span>
        </button>
        <button class="relative w-[66px] h-[72px] pt-[2px] grid place-items-center" aria-label="Picasa">
            <svg class="size-[36px]" viewBox="0 0 36 36"><circle cx="18" cy="18" r="17.500" fill="#fff"/><path d="M10 4.500A16 16 0 0 1 30.500 8L23 15z" fill="#12a574"/><path d="M32 9.500a16 16 0 0 1-1.500 19.500L21.500 20z" fill="#d9123a"/><path d="M28 31a16 16 0 0 1-22-3l7-7z" fill="#ffa20f"/><path d="M4.500 26A16 16 0 0 1 8 6l7 9z" fill="#0f9fe8"/></svg>
            <span class="absolute bottom-[6px] w-[9px] h-[5px] rounded-full bg-[#857f84]"></span>
        </button>
        <button class="relative w-[66px] h-[72px] pt-[2px] grid place-items-center" aria-label="Excel">
            <svg class="size-[36px]" viewBox="0 0 36 36"><path d="M9 1h14v17H9z" fill="#21a366"/><path d="M23 1h12v9H23z" fill="#33c481"/><path d="M23 10h12v8H23z" fill="#21a366"/><path d="M9 18h26v8H9z" fill="#107c41"/><path d="M9 26h26v8H9z" fill="#185c37"/><rect y="8" width="19" height="19" rx="1.500" fill="#107c41"/><path d="M5.500 12.500l7.500 10M13 12.500l-7.500 10" stroke="#fff" stroke-width="2.600"/></svg>
            <span class="absolute bottom-[6px] w-[9px] h-[5px] rounded-full bg-[#857f84]"></span>
        </button>

        <div class="absolute right-[29px] inset-y-0 flex items-center text-[17px] leading-[23px] text-[#1a1a1a]">
            <svg class="w-[18px] h-[10px]" viewBox="0 0 18 10"><path d="M.5 9.500L9 1l8.500 8.500" fill="none" stroke="#1a1a1a" stroke-width="1.600"/></svg>
            <svg class="ml-[14px] size-[26px]" viewBox="0 0 26 26" fill="none" stroke="#1a1a1a" stroke-width="1.400"><path d="M1.500 13A11 11 0 0 1 23 8M23.500 1v7.500H16M14 24.500A11 11 0 0 1 2.500 18M2 24.500V17.500h7"/><circle cx="19" cy="19" r="6" fill="#0a78d7" stroke="none"/></svg>
            <span class="ml-[21px] w-[36px] text-center">ENG<br>US</span>
            <svg class="ml-[26px] w-[26px] h-[20px]" viewBox="0 0 26 20" fill="none" stroke="#1a1a1a" stroke-width="1.700"><path d="M1.500 7.500a16 16 0 0 1 23 0M5 11a11.300 11.300 0 0 1 16 0M8.500 14.500a6.300 6.300 0 0 1 9 0"/><circle cx="13" cy="17.500" r="2" fill="#1a1a1a" stroke="none"/></svg>
            <svg class="ml-[11px] w-[24px] h-[18px]" viewBox="0 0 24 18" fill="none" stroke="#1a1a1a" stroke-width="1.500"><path d="M1 6h4l5-4.500v15L5 12H1zM14.500 5l8 8M22.500 5l-8 8"/></svg>
            <svg class="ml-[12px] w-[25px] h-[16px]" viewBox="0 0 25 16"><rect x="1" y="1" width="20" height="14" rx="3" fill="none" stroke="#1a1a1a" stroke-width="1.700"/><path d="M3.500 4h6v8.500h-6z" fill="#1a1a1a"/><path d="M22 5q3 .5 3 3t-3 3z" fill="#1a1a1a"/></svg>
            <span class="ml-[14px] w-[97px] text-right">5:04 SA<br>20/10/2022</span>
            <span class="ml-[12px] size-[24px] rounded-full bg-[#a3663f] text-white text-[15px] leading-6 text-center">4</span>
        </div>
    </div>
</body>
</html>
